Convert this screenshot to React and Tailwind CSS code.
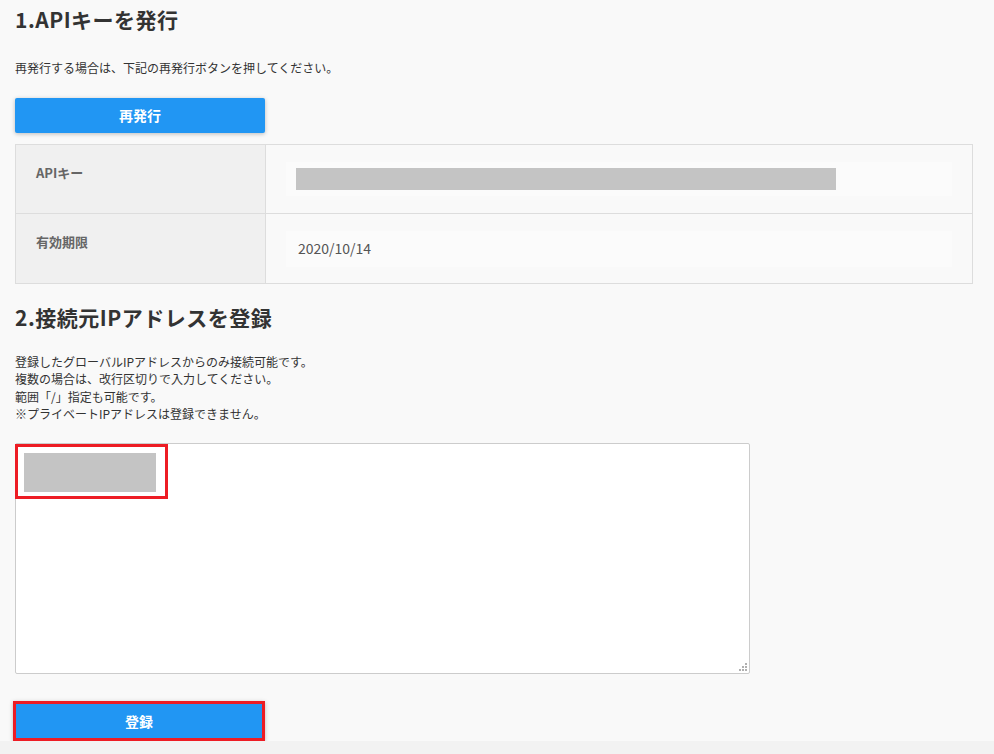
import React from "react";

const FONT = {
  fontFamily: '"Noto Sans CJK JP", "Noto Sans", sans-serif',
};

const notes = [
  "登録したグローバルIPアドレスからのみ接続可能です。",
  "複数の場合は、改行区切りで入力してください。",
  "範囲「/」指定も可能です。",
  "※プライベートIPアドレスは登録できません。",
];

const InfoRow = ({ label, children, last }) => (
  <div className={`flex h-[69px] ${last ? "" : "border-b border-[#dddddd]"}`}>
    <div className="w-[250px] shrink-0 border-r border-[#dddddd] bg-[#f0f0f0] pl-[20px] pt-[18px] text-[13px] font-bold text-[#666666]">
      {label}
    </div>
    <div className="flex flex-1 items-center pl-[20px] pr-[20px]">{children}</div>
  </div>
);

export default function App() {
  return (
    <div className="flex h-[754px] flex-col overflow-hidden bg-[#f9f9f9] text-[#333333]" style={FONT}>
      <div className="pl-[15px] pr-[21px]">
        <h2 className="pt-[4px] text-[21px] leading-[30px] font-bold tracking-[0.5px]">
          1.APIキーを発行
        </h2>
        <p className="mt-[25px] text-[12px] leading-[17px]">
          再発行する場合は、下記の再発行ボタンを押してください。
        </p>
        <button className="mt-[22px] h-[35px] w-[250px] rounded-[2px] bg-[#2196f3] text-[14px] font-bold text-white shadow-[0_1px_4px_rgba(0,0,0,0.25)]">
          再発行
        </button>

        <div className="mt-[11px] border border-[#dddddd]">
          <InfoRow label="APIキー">
            <div className="flex h-[34px] w-full items-center bg-[#fbfbfb] pl-[10px]">
              <div className="h-[22px] w-[540px] bg-[#c4c4c4]" />
            </div>
          </InfoRow>
          <InfoRow label="有効期限" last>
            <div className="flex h-[36px] w-full items-center bg-[#fbfbfb] pl-[12px] text-[14px] text-[#555555]">
              2020/10/14
            </div>
          </InfoRow>
        </div>

        <h2 className="mt-[18px] text-[21px] leading-[30px] font-bold tracking-[0.5px]">
          2.接続元IPアドレスを登録
        </h2>
        <div className="mt-[21px] text-[12px] leading-[17.3px]">
          {notes.map((line) => (
            <p key={line}>{line}</p>
          ))}
        </div>

        <div className="relative mt-[21px] h-[231px] w-[735px] rounded-[2px] border border-[#cccccc] bg-white">
          <div className="absolute left-[-1px] top-0 h-[55px] w-[153px] border-[3px] border-[#ed1c24] p-[6px]">
            <div className="h-[39px] w-[132px] bg-[#c4c4c4]" />
          </div>
          <svg
            className="absolute bottom-[1px] right-[1px]"
            width="9"
            height="9"
            viewBox="0 0 9 9"
            fill="#b0b0b0"
          >
            <rect x="6" y="0" width="2" height="2" />
            <rect x="3" y="3" width="2" height="2" />
            <rect x="6" y="3" width="2" height="2" />
            <rect x="0" y="6" width="2" height="2" />
            <rect x="3" y="6" width="2" height="2" />
            <rect x="6" y="6" width="2" height="2" />
          </svg>
        </div>

        <button className="ml-[-2px] mt-[27px] h-[40px] w-[252px] border-[3px] border-[#ed1c24] bg-[#2196f3] text-[14px] font-bold text-white shadow-[0_1px_4px_rgba(0,0,0,0.25)]">
          登録
        </button>
      </div>
      <div className="flex-1 bg-[#f2f2f2]" />
    </div>
  );
}
